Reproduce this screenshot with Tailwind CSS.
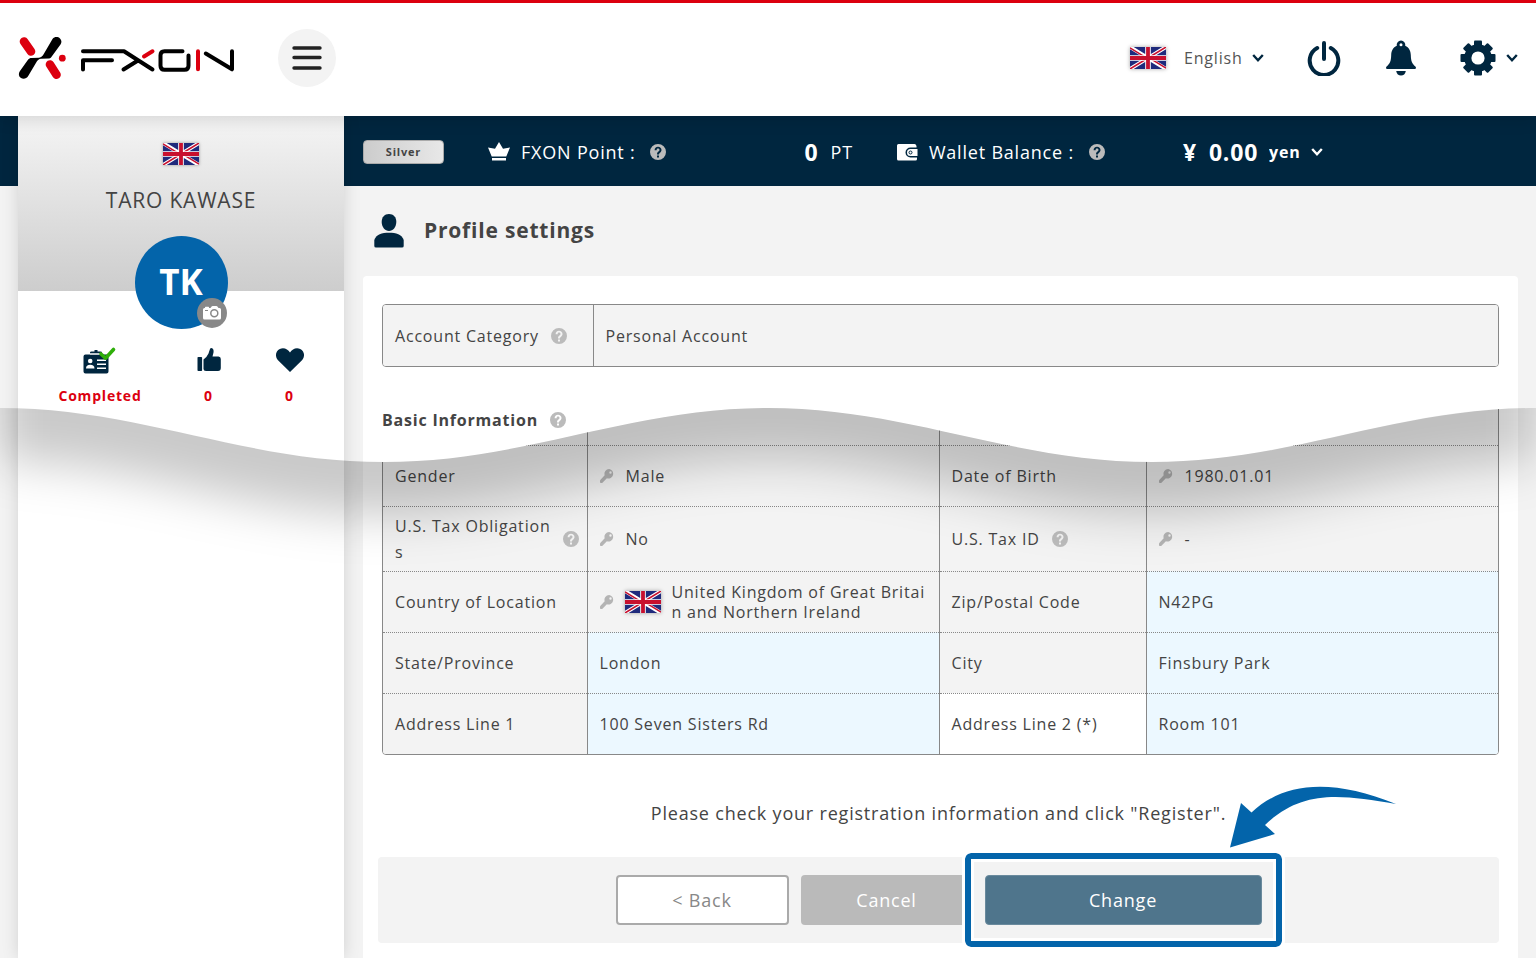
<!DOCTYPE html>
<html lang="en">
<head>
<meta charset="utf-8">
<title>FXON - Profile settings</title>
<meta name="viewport" content="width=device-width, initial-scale=1">
<script src="https://cdn.jsdelivr.net/npm/@tailwindcss/browser@4"></script>
</head>
<body class="min-h-screen flex flex-col bg-[#f3f3f3] text-[#444] text-base tracking-wider font-['Open_Sans','Noto_Sans',sans-serif]">

<svg class="hidden" aria-hidden="true">
  <symbol id="flag" viewBox="0 0 36 22">
    <rect width="36" height="22" fill="#1f2a7c"/>
    <path d="M0 0L36 22M36 0L0 22" stroke="#fff" stroke-width="3.800"/>
    <path d="M0 .8L18 11.8M36 0L18 11M0 22L18 11M36 21.2L18 10.2" stroke="#c8102e" stroke-width="1.500"/>
    <path d="M18 0V22M0 11H36" stroke="#fff" stroke-width="5.600"/>
    <path d="M18 0V22M0 11H36" stroke="#c8102e" stroke-width="3.800"/>
  </symbol>
  <symbol id="chevron" viewBox="0 0 12 10">
    <path d="M1.200 2L6 7.200L10.800 2" fill="none" stroke="currentColor" stroke-width="2.400"/>
  </symbol>
  <symbol id="help" viewBox="0 0 16 16">
    <path fill="currentColor" fill-rule="evenodd" d="M8 0a8 8 0 1 0 0 16A8 8 0 0 0 8 0zM7 11.6h2v2H7zM4.6 6.2C4.6 4.2 6 2.7 8 2.7s3.500 1.400 3.500 3.300c0 1.300-.7 2-1.500 2.700C9.300 9.300 9 9.700 9 10.600H7c0-1.500.5-2.200 1.400-3C9.100 7 9.500 6.700 9.500 6c0-.8-.6-1.400-1.500-1.400S6.600 5.300 6.600 6.200z"/>
  </symbol>
  <symbol id="key" viewBox="0 0 14 14">
    <path fill="currentColor" fill-rule="evenodd" d="M9.200 0a4.800 4.800 0 0 0-4.500 6.300L.5 10.700C0 11.200 0 11.600 0 12v1.200c0 .5.300.8.800.8h1.400l4.700-4.700a4.800 4.800 0 1 0 2.300-9.300zM10.500 2.300a1.200 1.200 0 1 1 0 2.400 1.200 1.200 0 0 1 0-2.400z"/>
  </symbol>
</svg>

<header class="relative z-30 h-[116px] border-t-3 border-[#dc000f] bg-white shadow-[0_3px_16px_rgba(0,0,0,0.14)] flex items-center justify-between pl-[18px] pr-[18px] pb-[3px]">
  <div class="flex items-center gap-[43px]">
    <a href="#" aria-label="FXON home">
      <svg class="w-[217px] h-[44px]" viewBox="18 36 217 44" fill="none">
        <g stroke-linecap="round" stroke-width="8.600">
          <path d="M24 41.500L31 51.500M50 64.500L56.500 74.700" stroke="#dc000f"/>
        </g>
        <path fill="#000" d="M52.500 39C54.500 36.500 58 36.500 60 38.500C61.800 40.300 61.800 42.500 60.500 44.500L51 57.500C50.300 58.300 49.500 58.500 48.500 58.500L41 58.700C38.800 59 37.900 60 36.800 61.500L28.200 76C26.500 78.700 23.500 79.500 21 78C18.500 76.400 18.300 73.500 19.800 71.200L28 59.800C29 58.500 30 58 31.500 58L39 57.800C41.500 57.500 42.500 56 43.600 54.300z"/>
        <circle cx="62.300" cy="58.200" r="3.400" fill="#dc000f"/>
        <g stroke="#000" stroke-width="4" stroke-linecap="round" stroke-linejoin="round">
          <path d="M83 51.200H124L152.500 69.500M83 69.500V60.300H112M123.500 69.500L138 60.500"/>
          <path d="M182.500 51.200H164.500Q160.500 51.200 160.500 55.200V65.700Q160.500 69.700 164.500 69.700H184.500Q188.500 69.700 188.500 65.700V55.500"/>
          <path d="M205.800 53.500L232 69.300V51.200"/>
        </g>
        <path d="M144 56.500L152.500 51.300M198 51.300V69.300" stroke="#dc000f" stroke-width="4" stroke-linecap="round"/>
      </svg>
    </a>
    <button type="button" aria-label="Menu" class="size-[58px] rounded-full bg-[#f3f3f3] flex items-center justify-center">
      <svg class="w-[30px] h-[26px]" viewBox="0 0 30 26" stroke="#222" stroke-width="3.400" stroke-linecap="round"><path d="M2 3H28M2 12.500H28M2 23H28"/></svg>
    </button>
  </div>
  <div class="flex items-center text-[#00263f]">
    <svg class="w-[36px] h-[22px] shadow-[0_0_4px_rgba(0,0,0,0.35)]"><use href="#flag"/></svg>
    <div class="ml-[18px] flex items-center">
      <select aria-label="Language" class="appearance-none bg-transparent w-[66px] text-base text-[#555]"><option>English</option></select>
      <svg class="ml-[2px] w-3 h-[10px]"><use href="#chevron"/></svg>
    </div>
    <button type="button" aria-label="Log out" class="ml-[43px]">
      <svg class="w-[34px] h-[36px]" viewBox="0 0 34 36" fill="none" stroke="currentColor" stroke-width="4" stroke-linecap="round"><path d="M17 3V19M10.200 8A14.300 14.300 0 1 0 23.800 8"/></svg>
    </button>
    <button type="button" aria-label="Notifications" class="ml-11">
      <svg class="w-[32px] h-[36px]" viewBox="0 0 32 36" fill="currentColor"><path fill-rule="evenodd" d="M16 .5a4.300 4.300 0 0 0-4.200 5.300C8 7.400 6.300 11 6.200 15C6 21.500 5 23.500 1.600 26.500C.6 27.400 1 29 2 29H30C31 29 31.400 27.400 30.400 26.500C27 23.500 26 21.500 25.800 15C25.700 11 24 7.400 20.200 5.800A4.300 4.300 0 0 0 16 .5zM16 3.200a1.500 1.500 0 1 1 0 3a1.500 1.500 0 0 1 0-3z"/><path d="M11.200 31H20.800C20.300 34 18.500 35.500 16 35.500S11.700 34 11.200 31z"/></svg>
    </button>
    <button type="button" aria-label="Settings" class="ml-[43px] flex items-center gap-[10px]">
      <svg class="size-[36px]" viewBox="0 0 36 36" fill="currentColor">
        <rect x="14" y=".5" width="8" height="35" rx="1"/><rect x="14" y=".5" width="8" height="35" rx="1" transform="rotate(45 18 18)"/><rect x="14" y=".5" width="8" height="35" rx="1" transform="rotate(90 18 18)"/><rect x="14" y=".5" width="8" height="35" rx="1" transform="rotate(135 18 18)"/>
        <circle cx="18" cy="18" r="13.800"/><circle cx="18" cy="18" r="6.600" fill="#fff"/>
      </svg>
      <svg class="w-3 h-[10px]"><use href="#chevron"/></svg>
    </button>
  </div>
</header>

<div class="relative flex-1 flex overflow-hidden">
  <div class="w-[18px] shrink-0"><div class="h-[70px] bg-[#00263f]"></div></div>

  <aside class="w-[326px] shrink-0 bg-white shadow-[0_0_16px_rgba(0,0,0,0.14)] z-10">
    <div class="h-[175px] bg-linear-to-b from-[#f5f5f5] to-[#cdcdcd] flex flex-col items-center pt-[27px]">
      <svg class="w-[36px] h-[22px] shrink-0 shadow-[0_0_3px_rgba(0,0,0,0.35)]"><use href="#flag"/></svg>
      <p class="mt-5 text-[21px] leading-[30px]">TARO KAWASE</p>
      <div class="relative mt-[21px] size-[93px] shrink-0 rounded-full bg-[#0364aa] text-white text-[35px] font-bold tracking-normal flex items-center justify-center">TK
        <button type="button" aria-label="Change photo" class="absolute right-[1px] bottom-[1px] size-[30px] rounded-full bg-[#888] flex items-center justify-center">
          <svg class="w-[18px] h-[14px]" viewBox="0 0 18 14"><path fill="#fff" d="M1.500 2H2V1.200Q2 .8 2.500.8H5.500Q6 .8 6 1.200V2H7.500L8.600.5Q9 0 9.600 0H13.400Q14 0 14.400.5L15.500 2H16.500Q18 2 18 3.500V12Q18 13.500 16.500 13.500H1.500Q0 13.500 0 12V3.500Q0 2 1.500 2z"/><circle cx="11.300" cy="7.300" r="3.500" fill="none" stroke="#888" stroke-width="1.500"/><path d="M2 4.500H5" stroke="#888"/></svg>
        </button>
      </div>
    </div>
    <div class="mt-[54px] grid grid-cols-[109px_108px_54px] justify-center justify-items-center text-[14px] leading-[20px] font-bold text-[#dc000f]">
      <div class="flex flex-col items-center gap-[11px]">
        <svg class="w-[34px] h-[30px]" viewBox="83 345 34 30"><path fill="#00263f" d="M85.500 354.500H90V352.500Q90 351.500 91.500 351.500H94.500V350H97.500V351.500H100.500Q102 351.500 102 352.500V354.500H106.500Q108.500 354.500 108.500 356.500V371.500Q108.500 373.500 106.500 373.500H85.500Q83.500 373.500 83.500 371.500V356.500Q83.500 354.500 85.500 354.500z"/><circle cx="90.200" cy="361" r="2.300" fill="#fff"/><path fill="#fff" d="M86 368.500Q86 364.800 90.200 364.800T94.500 368.500z"/><path d="M97 360.200H106M97 364.200H106M97 368.200H106M90 354H101" stroke="#fff" stroke-width="1.600"/><path d="M101 354L105.500 358.200L113.500 349.500" fill="none" stroke="#2fae0a" stroke-width="3.600" stroke-linecap="round" stroke-linejoin="round"/></svg>
        <span>Completed</span>
      </div>
      <div class="flex flex-col items-center gap-[11px]">
        <svg class="w-[24px] h-[30px]" viewBox="196 345 24 30" fill="#00263f"><rect x="196.500" y="357" width="4.600" height="14" rx=".8"/><path d="M202.500 359.500Q206 357 207.500 353.500Q208.300 351 209 349Q209.500 347.800 211 348.200Q213 349 212.500 352.500L211.500 356.500H217.500Q219.800 356.500 219.800 359V368Q219.800 371 217 371H205Q202.500 371 202.500 369z"/></svg>
        <span>0</span>
      </div>
      <div class="flex flex-col items-center gap-[11px]">
        <svg class="w-[30px] h-[30px]" viewBox="0 0 30 30" fill="#00263f"><path d="M15 27L3 15.200C-.5 11.500.8 5.500 4.800 4C9 2.300 12.800 4.200 15 7.500C17.200 4.200 21 2.300 25.200 4C29.200 5.500 30.500 11.500 27 15.200z"/></svg>
        <span>0</span>
      </div>
    </div>
  </aside>

  <main class="flex-1 min-w-0 flex flex-col">
    <div class="h-[70px] shrink-0 bg-[#00263f] text-white text-[18px] flex items-center pl-[19px] pt-[2px]">
      <span class="w-[81px] h-6 rounded bg-linear-to-r from-[#ccc] to-[#e8e8e8] border border-[#aaa] text-[#444] text-[11px] font-bold flex items-center justify-center">Silver</span>
      <svg class="ml-11 w-[22px] h-[20px]" viewBox="0 0 22 20" fill="#fff"><path d="M11 0L15 6.800L22 5.500L18.300 14.500H3.700L0 5.500L7 6.800z"/><path d="M4 16H18V18.500H4z"/></svg>
      <span class="ml-[11px]">FXON Point :</span>
      <button type="button" aria-label="About FXON Point" class="ml-[14px] text-[#bbb]"><svg class="size-4"><use href="#help"/></svg></button>
      <strong class="ml-[139px] text-[23px]">0</strong>
      <span class="ml-3">PT</span>
      <svg class="ml-11 w-[21px] h-[17px]" viewBox="0 0 21 17"><path fill="#fff" d="M1.500 0H17.500Q19 0 19.500 2V3.500H13.500A5 5 0 0 0 13.500 13.500H20V15Q20 16.500 18.500 16.500H1.500Q0 16.500 0 15V1.500Q0 0 1.500 0z"/><path fill="#fff" d="M13.500 5H20.500V12H13.500A3.500 3.500 0 0 1 13.500 5z"/><circle cx="13.500" cy="8.500" r="1.500" fill="#fff" stroke="#00263f"/></svg>
      <span class="ml-[11px]">Wallet Balance :</span>
      <button type="button" aria-label="About wallet balance" class="ml-[15px] text-[#bbb]"><svg class="size-4"><use href="#help"/></svg></button>
      <strong class="ml-[78px] text-[23px]">¥</strong>
      <strong class="ml-3 text-[23px]">0.00</strong>
      <div class="ml-[11px] flex items-center">
        <select aria-label="Currency" class="appearance-none bg-transparent w-10 text-base font-bold"><option>yen</option></select>
        <svg class="ml-[2px] w-3 h-[10px]"><use href="#chevron"/></svg>
      </div>
    </div>

    <h1 class="h-[90px] pl-[30px] flex items-center gap-5 text-[21px] font-bold">
      <svg class="w-[30px] h-[34px]" viewBox="0 0 30 34" fill="#00263f"><path d="M15 0C19.500 0 22.300 3 22.300 8S19 17 15 17S7.700 13 7.700 8S10.500 0 15 0z"/><path d="M.3 26C2 20.500 8 18.700 15 18.700S28 20.500 29.700 26V32Q29.700 33.500 28 33.500H2Q.3 33.500 .3 32z"/></svg>
      <span>Profile settings</span>
    </h1>

    <div class="flex-1 ml-[19px] mr-[18px] rounded-t bg-white pt-7 pb-[15px] px-[19px]">
      <div class="rounded border border-[#888] overflow-hidden">
        <table class="w-full table-fixed border-collapse bg-[#f3f3f3]">
          <tbody><tr class="h-[61px]">
            <th scope="row" class="w-[210px] pl-3 text-left font-normal"><span class="flex items-center gap-3">Account Category <button type="button" aria-label="About account category" class="text-[#bbb]"><svg class="size-4"><use href="#help"/></svg></button></span></th>
            <td class="border-l border-[#888] pl-3">Personal Account</td>
          </tr></tbody>
        </table>
      </div>

      <section class="relative mt-7">
        <h2 class="absolute z-20 left-0 top-3 h-[26px] flex items-center gap-3 font-bold">Basic Information <button type="button" aria-label="About basic information" class="text-[#bbb]"><svg class="size-4"><use href="#help"/></svg></button></h2>
        <div class="rounded border border-[#888] overflow-hidden">
          <table class="w-full table-fixed border-collapse bg-[#f3f3f3]">
            <colgroup><col class="w-[204px]"><col><col class="w-[207px]"><col></colgroup>
            <tbody>
              <tr class="h-[49px]">
                <td></td><td class="border-l border-[#888]"></td><td class="border-l border-[#888]"></td><td class="border-l border-[#888]"></td>
              </tr>
              <tr class="h-[61px] border-t border-dotted border-[#888]">
                <th scope="row" class="pl-3 text-left font-normal">Gender</th>
                <td class="border-l border-[#888] pl-3"><span class="flex items-center gap-3"><svg class="w-[14px] h-[14px] text-[#b4b4b4]"><use href="#key"/></svg>Male</span></td>
                <th scope="row" class="border-l border-[#888] pl-3 text-left font-normal">Date of Birth</th>
                <td class="border-l border-[#888] pl-3"><span class="flex items-center gap-3"><svg class="w-[14px] h-[14px] text-[#b4b4b4]"><use href="#key"/></svg>1980.01.01</span></td>
              </tr>
              <tr class="h-[65px] border-t border-dotted border-[#888]">
                <th scope="row" class="pl-3 pr-2 text-left font-normal"><span class="flex items-center gap-2"><span class="flex-1 leading-[26px] break-all">U.S. Tax Obligations</span><button type="button" aria-label="About U.S. tax obligations" class="text-[#bbb]"><svg class="size-4"><use href="#help"/></svg></button></span></th>
                <td class="border-l border-[#888] pl-3"><span class="flex items-center gap-3"><svg class="w-[14px] h-[14px] text-[#b4b4b4]"><use href="#key"/></svg>No</span></td>
                <th scope="row" class="border-l border-[#888] pl-3 text-left font-normal"><span class="flex items-center gap-3">U.S. Tax ID <button type="button" aria-label="About U.S. tax ID" class="text-[#bbb]"><svg class="size-4"><use href="#help"/></svg></button></span></th>
                <td class="border-l border-[#888] pl-3"><span class="flex items-center gap-3"><svg class="w-[14px] h-[14px] text-[#b4b4b4]"><use href="#key"/></svg>-</span></td>
              </tr>
              <tr class="h-[61px] border-t border-dotted border-[#888]">
                <th scope="row" class="pl-3 text-left font-normal">Country of Location</th>
                <td class="border-l border-[#888] pl-3 pr-3"><span class="flex items-center"><svg class="w-[14px] h-[14px] shrink-0 text-[#b4b4b4]"><use href="#key"/></svg><svg class="ml-[11px] w-[36px] h-[22px] shrink-0 shadow-[0_0_4px_rgba(0,0,0,0.35)]"><use href="#flag"/></svg><span class="ml-[11px] leading-5 break-all">United Kingdom of Great Britain and Northern Ireland</span></span></td>
                <th scope="row" class="border-l border-[#888] pl-3 text-left font-normal">Zip/Postal Code</th>
                <td class="border-l border-[#888] pl-3 bg-[#ecf8ff]">N42PG</td>
              </tr>
              <tr class="h-[61px] border-t border-dotted border-[#888]">
                <th scope="row" class="pl-3 text-left font-normal">State/Province</th>
                <td class="border-l border-[#888] pl-3 bg-[#ecf8ff]">London</td>
                <th scope="row" class="border-l border-[#888] pl-3 text-left font-normal">City</th>
                <td class="border-l border-[#888] pl-3 bg-[#ecf8ff]">Finsbury Park</td>
              </tr>
              <tr class="h-[61px] border-t border-dotted border-[#888]">
                <th scope="row" class="pl-3 text-left font-normal">Address Line 1</th>
                <td class="border-l border-[#888] pl-3 bg-[#ecf8ff]">100 Seven Sisters Rd</td>
                <th scope="row" class="border-l border-[#888] pl-3 text-left font-normal bg-white">Address Line 2 (*)</th>
                <td class="border-l border-[#888] pl-3 bg-[#ecf8ff]">Room 101</td>
              </tr>
            </tbody>
          </table>
        </div>
      </section>

      <p class="mt-11 text-center text-[18px] leading-[28px] pr-1">Please check your registration information and click "Register".</p>

      <div class="mt-[30px] -ml-1 h-[86px] rounded bg-[#f3f3f3] flex items-center justify-center gap-3 text-[18px]">
        <button type="button" class="w-[173px] h-[50px] rounded border-2 border-[#aaa] bg-white text-[#888]">&lt; Back</button>
        <button type="button" class="w-[172px] h-[50px] rounded bg-[#bababa] text-white">Cancel</button>
        <div class="relative">
          <span class="absolute -inset-x-5 -inset-y-[22px] rounded-md border-6 border-[#0364aa] bg-[#f3f3f3] outline-3 outline-white shadow-[inset_0_0_0_3px_#fff]"></span>
          <svg class="absolute left-[244px] -top-[89px] w-[168px] h-[62px]" viewBox="1229 786 168 62" aria-hidden="true"><path fill="#0364aa" d="M1230 847.500L1241 803L1251.500 812.500C1284 782 1332 778 1396 804C1338 794 1302 790 1265 825L1275 834z"/></svg>
          <button type="button" class="relative w-[277px] h-[50px] rounded bg-[#4f758c] border border-[#6a8a9d] text-white">Change</button>
        </div>
      </div>
    </div>
  </main>

  <svg class="absolute z-10 left-0 top-[264px] w-full h-[240px] pointer-events-none" viewBox="0 380 1536 240" preserveAspectRatio="none" aria-hidden="true">
    <defs>
      <clipPath id="below"><path d="M0 408C140 408 244 462 384 462S628 408 768 408S1012 462 1152 462S1396 408 1536 408V620H0z"/></clipPath>
      <filter id="soft" filterUnits="userSpaceOnUse" x="-100" y="200" width="1736" height="500"><feGaussianBlur stdDeviation="24"/></filter>
    </defs>
    <path fill="#fff" d="M363 380H1518V408.200C1390 411 1285 462 1152 462C1012 462 908 408 768 408S524 462 384 462H363z"/>
    <g clip-path="url(#below)"><path filter="url(#soft)" fill="#000" fill-opacity=".21" d="M0 300H1536V461C1396 461 1292 515 1152 515S908 461 768 461S524 515 384 515S140 461 0 461z"/></g>
  </svg>
</div>
</body>
</html>
